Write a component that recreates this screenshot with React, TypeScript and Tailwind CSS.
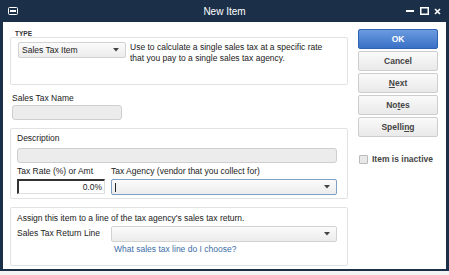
import React from "react";

const font = { fontFamily: '"Liberation Sans", Arial, sans-serif' };

function Arrow() {
  return (
    <svg width="6" height="4" viewBox="0 0 6 4" className="shrink-0">
      <path d="M0 0 L6 0 L3 3.5 Z" fill="#444" />
    </svg>
  );
}

function Dropdown({
  width,
  label,
  focused,
  children,
}: {
  width: string;
  label?: string;
  focused?: boolean;
  children?: React.ReactNode;
}) {
  return (
    <div
      className={`flex h-[16px] items-center justify-between rounded-[2px] border bg-gradient-to-b from-[#fbfbfb] to-[#ececec] pr-[6px] pl-[3px] ${width} ${
        focused ? "border-[#7f9fc4]" : "border-[#d2d2d2]"
      }`}
    >
      <span className="text-[8.5px] text-[#222]">{label}</span>
      {children}
      <Arrow />
    </div>
  );
}

function Button({
  children,
  primary,
}: {
  children: React.ReactNode;
  primary?: boolean;
}) {
  return (
    <div
      className={`flex h-[20px] w-[80px] items-center justify-center rounded-[2px] border text-[8.5px] ${
        primary
          ? "border-[#2f62b0] bg-gradient-to-b from-[#6b9be0] to-[#3a71c6] font-bold text-white"
          : "border-[#cdcdcd] bg-gradient-to-b from-[#fafafa] to-[#e9e9e9] font-bold text-[#444]"
      }`}
    >
      {children}
    </div>
  );
}

export default function App() {
  return (
    <div className="h-[275px] w-[449px] overflow-hidden bg-[#f3f3f3]" style={font}>
      <div className="flex h-[271px] flex-col border-x-[3px] border-b-[2px] border-[#1b2f48] bg-white">
        {/* title bar */}
        <div className="relative flex h-[22px] shrink-0 items-center bg-[#1b2f48] px-[4px]">
          <svg width="10" height="8" viewBox="0 0 10 8" className="ml-[1px]">
            <rect x="0.5" y="0.5" width="9" height="7" rx="1" fill="none" stroke="#fff" />
            <rect x="2" y="3" width="6" height="2" fill="#fff" />
          </svg>
          <span className="absolute inset-x-0 text-center text-[10px] text-white">New Item</span>
          <div className="ml-auto flex items-center gap-[5px] pr-[1px]">
            <svg width="9" height="8" viewBox="0 0 9 8">
              <rect x="0" y="3" width="8" height="2" fill="#fff" />
            </svg>
            <svg width="9" height="8" viewBox="0 0 9 8">
              <rect x="0.75" y="0.75" width="7.5" height="6.5" fill="none" stroke="#fff" strokeWidth="1.5" />
            </svg>
            <svg width="7" height="7" viewBox="0 0 7 7">
              <path d="M1 1 L6 6 M6 1 L1 6" stroke="#fff" strokeWidth="1.6" />
            </svg>
          </div>
        </div>

        {/* body */}
        <div className="flex flex-1">
          {/* left */}
          <div className="flex w-[345px] flex-col pt-[9px] pl-[7px]">
            <div className="pl-[5px] text-[6.5px] leading-[5px] font-bold text-[#333]">TYPE</div>
            <div className="mt-[1px] flex h-[48px] w-[338px] items-start gap-[4px] rounded-[2px] border border-[#e2e2e2] pt-[4px] pl-[7px]">
              <Dropdown width="w-[108px]" label="Sales Tax Item" />
              <p className="text-[8.5px] leading-[11px] text-[#222]">
                Use to calculate a single sales tax at a specific rate
                <br />
                that you pay to a single sales tax agency.
              </p>
            </div>

            <div className="mt-[8px] pl-[2px] text-[8.5px] leading-[10px] text-[#222]">Sales Tax Name</div>
            <div className="mt-[2px] ml-[2px] h-[15px] w-[110px] rounded-[3px] border border-[#cfcfcf] bg-[#ececec]" />

            <div className="mt-[8px] flex h-[71px] w-[338px] flex-col rounded-[2px] border border-[#e2e2e2] pt-[4px] pl-[6px]">
              <div className="text-[8.5px] leading-[10px] text-[#222]">Description</div>
              <div className="mt-[5px] h-[15px] w-[320px] rounded-[3px] border border-[#cfcfcf] bg-[#ececec]" />
              <div className="mt-[3px] flex gap-[6px]">
                <div className="flex w-[88px] flex-col">
                  <div className="text-[8.5px] leading-[10px] text-[#222]">Tax Rate (%) or Amt</div>
                  <div className="mt-[3px] flex h-[15px] items-center justify-end border-t-2 border-l-2 border-[#333] border-r border-b border-r-[#ddd] border-b-[#ddd] bg-white pr-[2px] text-[8.5px] text-[#222]">
                    0.0%
                  </div>
                </div>
                <div className="flex w-[226px] flex-col">
                  <div className="text-[8.5px] leading-[10px] text-[#222]">Tax Agency (vendor that you collect for)</div>
                  <div className="mt-[3px]">
                    <Dropdown width="w-[226px]" focused>
                      <span className="mr-auto h-[9px] w-px bg-[#222]" />
                    </Dropdown>
                  </div>
                </div>
              </div>
            </div>

            <div className="mt-[8px] flex h-[59px] w-[338px] flex-col rounded-[2px] border border-[#e2e2e2] pt-[5px] pl-[6px]">
              <div className="text-[8.5px] leading-[10px] text-[#222]">
                Assign this item to a line of the tax agency's sales tax return.
              </div>
              <div className="mt-[1px] flex items-center gap-[11px]">
                <span className="text-[8.5px] text-[#222]">Sales Tax Return Line</span>
                <div className="mt-[2px]">
                  <Dropdown width="w-[226px]" />
                </div>
              </div>
              <div className="mt-[2px] pl-[97px] text-[8.5px] leading-[10px] text-[#3b6ea8]">
                What sales tax line do I choose?
              </div>
            </div>
          </div>

          {/* right */}
          <div className="flex flex-col gap-[2px] pt-[7px] pl-[10px]">
            <Button primary>OK</Button>
            <Button>Cancel</Button>
            <Button>
              <span>
                <span className="underline">N</span>ext
              </span>
            </Button>
            <Button>
              <span>
                No<span className="underline">t</span>es
              </span>
            </Button>
            <Button>
              <span>
                Spelli<span className="underline">n</span>g
              </span>
            </Button>
            <div className="mt-[14px] flex items-center gap-[4px] pl-[1px]">
              <div className="h-[9px] w-[9px] rounded-[1px] border border-[#bbb] bg-[#e8e8e8]" />
              <span className="text-[8.5px] font-bold text-[#444]">Item is inactive</span>
            </div>
          </div>
        </div>
      </div>
    </div>
  );
}
